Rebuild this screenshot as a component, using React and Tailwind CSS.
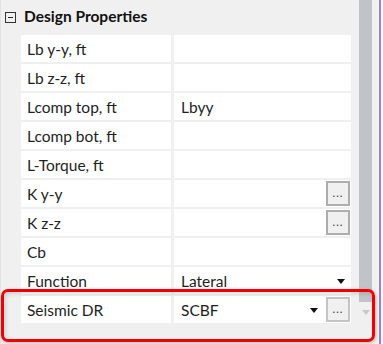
import React from 'react';

const rows = [
  { label: 'Lb y-y, ft', value: '' },
  { label: 'Lb z-z, ft', value: '' },
  { label: 'Lcomp top, ft', value: 'Lbyy' },
  { label: 'Lcomp bot, ft', value: '' },
  { label: 'L-Torque, ft', value: '' },
  { label: 'K y-y', value: '', button: true },
  { label: 'K z-z', value: '', button: true },
  { label: 'Cb', value: '' },
  { label: 'Function', value: 'Lateral', dropdown: 'far' },
  { label: 'Seismic DR', value: 'SCBF', dropdown: 'near', button: true, light: true },
];

function Arrow() {
  return (
    <svg width="8" height="5" viewBox="0 0 8 5" className="shrink-0">
      <path d="M0 0 H8 L4 5 Z" fill="#111" />
    </svg>
  );
}

function DotsButton({ light }) {
  return (
    <div
      className={`ml-auto mr-px w-[24px] h-[25px] flex items-end justify-center pb-[6px] bg-[#f0f0f0] border-2 ${
        light ? 'border-[#c4c4c4]' : 'border-[#adadad]'
      }`}
    >
      <span className="text-[11px] leading-none tracking-[1px] text-[#333]">...</span>
    </div>
  );
}

function Row({ row }) {
  return (
    <div className="flex shrink-0 h-[27px] gap-[3px]">
      <div className="w-[150px] bg-white flex items-center pl-[6px] pt-[2px] text-[#1e1e1e]">
        {row.label}
      </div>
      <div className="w-[177px] bg-white flex items-center pl-[7px] text-[#1e1e1e]">
        <span className="pt-[2px]">{row.value}</span>
        {row.dropdown === 'far' && (
          <div className="ml-auto mr-[6px] pt-[2px]">
            <Arrow />
          </div>
        )}
        {row.dropdown === 'near' && (
          <div className="ml-auto mr-[8px] pt-[1px]">
            <Arrow />
          </div>
        )}
        {row.button && (
          <div className={row.dropdown ? '' : 'ml-auto'}>
            <DotsButton light={row.light} />
          </div>
        )}
      </div>
    </div>
  );
}

export default function App() {
  return (
    <div
      className="relative w-[383px] h-[344px] overflow-hidden bg-[#f0f0f0] flex text-[15.5px]"
      style={{ fontFamily: 'Lato, "Noto Sans", sans-serif' }}
    >
      <div className="w-[353px] flex flex-col border-l border-[#e2e2e2]">
        <div className="h-[35px] shrink-0 flex items-center gap-[8px] pl-[4px] pb-[1px]">
          <div className="w-[11px] h-[11px] border border-[#333] flex items-center justify-center">
            <div className="w-[5px] h-px bg-[#222]" />
          </div>
          <span className="font-bold text-[#111]">Design Properties</span>
        </div>
        <div className="flex flex-col gap-[2px] pl-[20px]">
          {rows.map((r) => (
            <Row key={r.label} row={r} />
          ))}
        </div>
      </div>
      <div className="w-[26px] flex flex-col items-start pl-[6px]">
        <div className="w-[13px] h-[302px] shrink-0 bg-[#c2c3c9]" />
        <div className="mt-[8px] ml-[3px]">
          <svg width="8" height="5" viewBox="0 0 8 5">
            <path d="M0 0 H8 L4 5 Z" fill="#c8c8c8" />
          </svg>
        </div>
      </div>
      <div className="w-[2px] bg-[#9b82cf]" />
      <div className="flex-1 bg-[#f7f7f7]" />

      <div className="absolute left-[1px] top-[289px] w-[374px] h-[53px] rounded-[7px] border-[3px] border-[#f20000] shadow-[inset_2px_2px_4px_rgba(0,0,0,0.12),1px_1px_3px_rgba(0,0,0,0.25)]" />
    </div>
  );
}
